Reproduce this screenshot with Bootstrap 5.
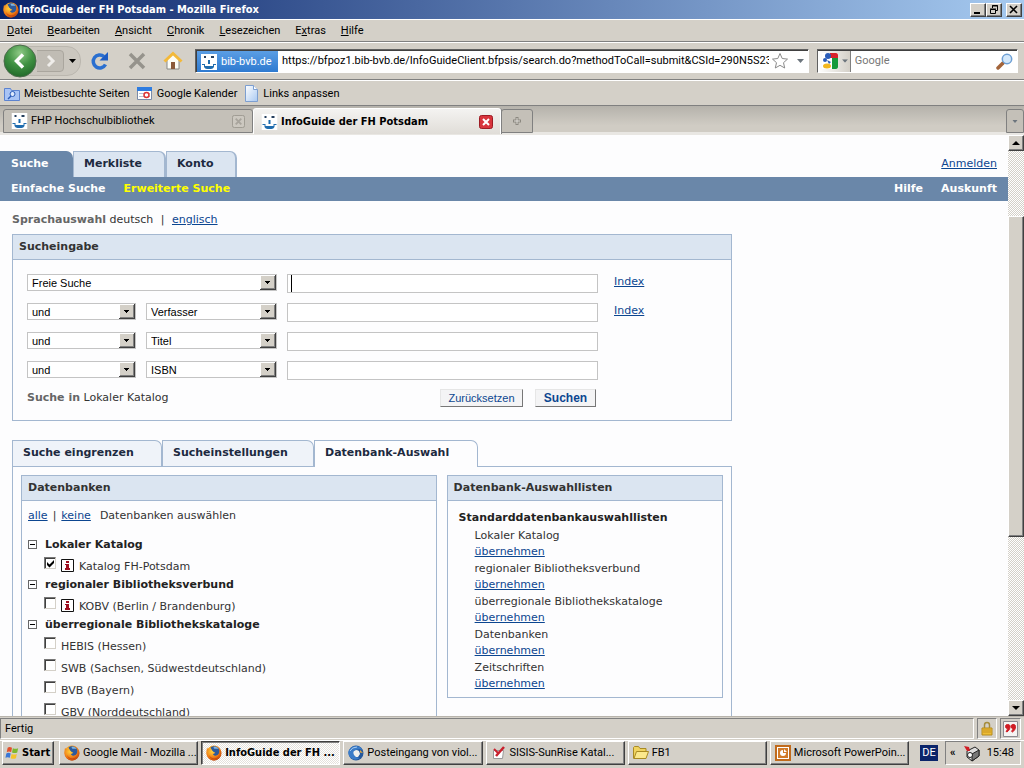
<!DOCTYPE html>
<html lang="de">
<head>
<meta charset="utf-8">
<meta name="viewport" content="width=device-width, initial-scale=1">
<title>InfoGuide der FH Potsdam - Mozilla Firefox</title>
<link rel="stylesheet" href="https://cdn.jsdelivr.net/npm/bootstrap@5.3.0/dist/css/bootstrap.min.css">
<style>
:root{--face:#d4d0c8;--shade:#808080;--ui:Roboto,"Liberation Sans",sans-serif;--uibold:"DejaVu Sans Condensed","DejaVu Sans",sans-serif;--page:"DejaVu Sans",sans-serif;--line:#a3b7d0;--pale:#dbe5f1;--bar:#6a87a9}
body{font:11px/14px var(--ui);color:#000;background:var(--face);height:100vh;overflow:hidden}
a{color:#0c4690}
button,input,select{font:inherit;color:inherit}
svg{display:block;flex:none}
.clean{background:none;border:0;padding:0}
.raised{background:var(--face);border:1px solid;border-color:#fff #404040 #404040 #fff;box-shadow:inset -1px -1px var(--shade)}
.sunken{border:1px solid;border-color:var(--shade) #fff #fff var(--shade)}
.uibold{font-family:var(--uibold);font-weight:700}

/* window frame */
.titlebar{height:19px;background:linear-gradient(90deg,#0a246a,#a6caf0);color:#fff;padding:0 2px 0 3px}
.titlebar button{width:16px;height:14px;padding:0}
.menubar{height:23px;border-top:1px solid #fff;border-bottom:1px solid var(--shade);padding:1px 7px 0;gap:15px}
.menubar a,.bookmarks a{color:#000;text-decoration:none}
.navrow{height:38px;border-top:1px solid #fff;border-bottom:1px solid var(--shade);padding:0 6px 0 4px}
.pill{height:30px;width:77px;border-radius:14px;background:#cbc7bf;border:1px solid #bbb7af}
.pill .back{margin-left:-2px}
.field{height:24px;background:#fff;border:1px solid;border-color:#606060 #fff #fff #606060;box-shadow:inset 1px 1px #404040}
.field input{border:0;outline:0;background:none;min-width:0}
.ident{background:linear-gradient(#5b9ee4,#2e7ad0);color:#fff;width:81px;height:21px;margin:1px 0 0 1px}
.engine{background:linear-gradient(90deg,#fff,var(--face));border-right:1px solid var(--shade);height:21px;width:33px}
.searchbox{width:201px}
.searchbox input::placeholder{color:#777;opacity:1}
.bookmarks{height:26px;border-top:1px solid #fff;border-bottom:1px solid var(--shade);padding:1px 4px 0;gap:7px}
.tabstrip{height:29px;background:linear-gradient(#b5b2ab,#d0ccc4 75%);border-bottom:3px solid #e9e7e3;padding:2px 0 0 3px}
.btab{width:250px;height:24px;border:1px solid var(--shade);border-radius:3px 3px 0 0;background:#c4c0b8;padding:0 7px;gap:3px;margin-top:1px}
.btab.on{width:248px;height:26px;margin-top:0;background:linear-gradient(#f4f3f1,#e0ddd8);border-bottom:0;border-color:#fff;box-shadow:1px 0 var(--shade)}
.btab.add{width:32px}
.btab.more{width:18px;margin-left:auto}
.edge{box-shadow:0 1px var(--shade);min-height:0}

/* scroll bar of the page view */
.scroller{width:16px;background:repeating-conic-gradient(#fff 0 25%,#d4d0c8 0 50%) 0 0/2px 2px}
.scroller button{width:16px;height:16px;padding:0}
.thumb{flex:320 0 0;margin-top:65px}
.track{flex:164 0 0}

/* library page */
.view{background:#fdfdfe;font:11px/16px var(--page);color:#333;min-width:0}
.maintabs{padding-right:11px}
.maintabs .mtab,.subtabs a{font-weight:700;text-decoration:none;color:#1d2a40;border:1px solid var(--line);border-radius:0 7px 0 0}
.maintabs .mtab{height:26px;line-height:24px;background:var(--pale);border-bottom:0;border-width:1px 2px 0 1px;padding:0 11px 0 10px}
.maintabs .mtab.on{background:var(--bar);border-color:var(--bar);color:#fff}
.w-tab1{width:73px}.w-tab2{width:93px}.w-tab3{width:71px}
.login{line-height:26px}
.navstrip{background:var(--bar);height:24px;padding:0 11px;gap:18px}
.navstrip a{color:#fff;font-weight:700;text-decoration:none}
.navstrip a.on{color:#ff0}
.lingo{padding:11px 0 6px}
.sheet{width:720px;max-width:100%}
.panel{border:1px solid var(--line)}
.panel h2{font:700 11px/24px var(--page);margin:0;padding:0 6px;background:var(--pale);border-bottom:1px solid var(--line)}
.gray{color:#666;font-weight:700}
.form-grid{padding:14px}
.qrow{height:19px;margin-bottom:10px;gap:10px}
.qrow select{appearance:none;height:17px;border:1px solid #c4c4c4;border-radius:0;padding:0 18px 0 4px;color:#000;font:11px/14px "Liberation Sans",sans-serif;background:#fff url("data:image/svg+xml,%3Csvg xmlns='http://www.w3.org/2000/svg' width='16' height='15'%3E%3Cpath fill='%23404040' d='M0 0h16v15H0z'/%3E%3Cpath fill='%23fff' d='M0 0h15v14H0z'/%3E%3Cpath fill='%23808080' d='M1 1h14v13H1z'/%3E%3Cpath fill='%23d4d0c8' d='M1 1h13v12H1z'/%3E%3Cpath d='M5 6h5v1H5zM6 7h3v1H6zM7 8h1v1H7z'/%3E%3C/svg%3E") right 0 top 0 no-repeat}
.w-wide{width:250px}.w-op{width:109px}.w-term{width:131px}
.qrow input{width:311px;height:19px;border:1px solid #c4c4c4;background:#fff;padding:0 4px;outline:0}
.qrow input.caret{background:linear-gradient(#000,#000) 3px 0/1px 17px no-repeat #fff}
.qrow a{margin-left:6px}
.actions{width:569px;max-width:100%;gap:12px;height:16px}
.act{width:83px;height:18px;background:#f4f4f5;border:1px solid;border-color:#e6e6e6 #777 #777 #e6e6e6;color:#0c4690;font:11px/14px "Liberation Sans",sans-serif;padding:0}
.act.go{width:61px;font-weight:700;font-size:12px}
.subtabs{margin-top:19px}
.subtabs a{height:26px;line-height:24px;background:#eff3f9;padding:0 10px;border-bottom:0}
.subtabs a.on{background:#fdfdfe;height:27px;margin-bottom:-1px;position:relative}
.w-s1{width:150px}.w-s2{width:152px}.w-s3{width:164px}
.dbbody{padding:8px;gap:10px;border-bottom:0!important}
.dbleft{flex:416 0 0;margin-bottom:-8px;border-bottom:0}
.dbright{flex:276 0 0;height:223px}
.dbin{padding:7px 6px 0}
.pick{margin-bottom:12px;gap:5px}
.group{font-weight:700;height:18px;gap:8px;color:#222}
.opt{height:22px;padding:4px 0 0 16px;gap:5px}
.opt input{appearance:none;width:12px;height:12px;margin:0 0 8px;border:1px solid;border-color:#777 #d4d0c8 #d4d0c8 #777;box-shadow:inset 1px 1px #404040;background:#fff}
.opt input:checked{background:url("data:image/svg+xml,%3Csvg xmlns='http://www.w3.org/2000/svg' width='10' height='10'%3E%3Cpath d='M2 4l2.500 2.500L9 2v3L4.500 9.500 2 7z'/%3E%3C/svg%3E") no-repeat #fff}
.minus{width:9px;height:9px;border:1px solid #666;background:linear-gradient(#000,#000) center/5px 1px no-repeat;padding:0;margin-bottom:2px}
.lists{padding:8px 11px 0}
.lists dt{font-weight:700;line-height:18px;color:#222}
.lists dd{margin:1px 0 0 16px}
.lists dd a{display:table;line-height:16px}

/* status bar and task bar */
.status{height:24px;border-top:1px solid #b8b4ac;padding:1px 3px 1px 0;gap:3px}
.cell{padding:0 2px}
.taskbar{height:28px;border-top:1px solid #fff;padding:0 3px 3px 2px;gap:3px}
.task{flex:1 1 0;min-width:0;height:24px;padding:0 4px;gap:3px}
.task.on{border-color:#404040 #fff #fff #404040;box-shadow:inset 1px 1px var(--shade);background:repeating-conic-gradient(#fff 0 25%,#e4e1dc 0 50%) 0 0/2px 2px}
.start{width:52px;height:24px;padding:0 2px;margin-right:2px;gap:3px}
.lang{background:#0a246a;color:#fff;width:18px;height:16px;line-height:16px;text-align:center;margin:0 4px 0 8px}
.tray{width:76px;height:24px;padding:0 6px 0 4px}
</style>
</head>
<body class="d-flex flex-column">

<svg width="0" height="0" class="position-absolute" aria-hidden="true">
  <defs>
    <radialGradient id="gGreen" cx=".5" cy=".25" r=".8"><stop offset="0" stop-color="#8fc986"/><stop offset=".5" stop-color="#3f9142"/><stop offset="1" stop-color="#1d6426"/></radialGradient>
    <radialGradient id="gFox" cx=".4" cy=".3" r=".8"><stop offset="0" stop-color="#ffd23c"/><stop offset=".6" stop-color="#ee7a15"/><stop offset="1" stop-color="#b33a0a"/></radialGradient>
    <linearGradient id="gPage" x2="1" y2="1"><stop offset="0" stop-color="#fff"/><stop offset="1" stop-color="#a9c9f2"/></linearGradient>
  </defs>
  <symbol id="fox" viewBox="0 0 16 16"><circle cx="8" cy="8" r="7.600" fill="url(#gFox)"/><path d="M4.500 2.500C7 .3 12 .8 13.300 5c.6 3-1 5.500-3.800 6C7 11 6.500 9.500 7 8.500l2-.7-2.500-1.300z" fill="#2c5a9c"/><path d="M7.500 2c2-.8 4 0 5 2-2-.6-3 0-4.500-.5z" fill="#7fb4e2"/><path d="M1 3l2 1.500 2-.3L7 6.500 9.300 8 7 9c.3 1.800 3 2.500 5 .8 1.500-1.400 1.900-3.300 1.500-5.300C16.500 9 13.500 15.300 8 15.400 2.500 15.300-.8 9.500 1 3z" fill="url(#gFox)"/><path d="M3 10c2 4 7 4.500 10 1.500C10.500 16 4 15 3 10z" fill="#c9480d"/></symbol>
  <symbol id="face" viewBox="0 0 16 16"><path fill="#fff" d="M0 0h16v16H0z"/><path fill="#27405e" d="M3 2h2v2H3zM10 2h3v2h-3z"/><path fill="#1f6cae" d="M7 6h2v4H7zM1 10h3v2H3v-1H1zM12 10h3v1h-2v1h-1zM3 12h10v1q-1 2-3 2H6q-2 0-3-2z"/></symbol>
  <symbol id="closer" viewBox="0 0 14 14"><rect x=".5" y=".5" width="13" height="13" rx="2" fill="var(--b)" stroke="var(--s)"/><path d="M4 4l6 6M10 4l-6 6" stroke="var(--x)" stroke-width="2"/></symbol>
  <symbol id="down" viewBox="0 0 7 4"><path d="M0 0h7L3.500 4z" fill="currentColor"/></symbol>
  <symbol id="info" viewBox="0 0 13 13"><path d="M.5.5h12v12H.5z" fill="#fff" stroke="#111"/><path fill="#a01020" d="M5 2h3v2H5zM4 5h4v4h1v2H4V9h1V6H4z"/></symbol>
</svg>

<header>
  <div class="titlebar d-flex align-items-center">
    <svg width="16" height="16"><use href="#fox"/></svg>
    <span class="uibold me-auto text-nowrap">InfoGuide der FH Potsdam - Mozilla Firefox</span>
    <button class="raised" aria-label="Minimieren"><svg width="14" height="12"><path d="M3 8h6v2H3z"/></svg></button>
    <button class="raised" aria-label="Wiederherstellen"><svg width="14" height="12" fill="none" stroke="#000"><path d="M5.500 4V1.500h5v5H9M5 2h6M3.500 5.500h5v4h-5zM3 5h6"/></svg></button>
    <button class="raised ms-1" aria-label="Schließen"><svg width="14" height="12"><path d="M3 2l7 7M10 2L3 9" stroke="#000" stroke-width="1.600"/></svg></button>
  </div>
  <nav class="menubar d-flex align-items-center">
    <a href="#"><u>D</u>atei</a><a href="#"><u>B</u>earbeiten</a><a href="#"><u>A</u>nsicht</a><a href="#"><u>C</u>hronik</a><a href="#"><u>L</u>esezeichen</a><a href="#">E<u>x</u>tras</a><a href="#"><u>H</u>ilfe</a>
  </nav>
  <div class="navrow d-flex align-items-center">
    <div class="pill d-flex align-items-center">
      <button class="clean back" aria-label="Zurück"><svg width="34" height="34" viewBox="0 0 34 34"><circle cx="17" cy="17" r="16" fill="url(#gGreen)" stroke="#4c6b4c"/><path d="M20 10.500L13.500 17l6.500 6.500" fill="none" stroke="#fff" stroke-width="3.500"/></svg></button>
      <button class="clean" aria-label="Vor"><svg width="28" height="22" viewBox="0 0 28 22"><path d="M0 .5h23q3.500 0 3.500 3.500v14q0 3.500-3.500 3.500H0" fill="#c0bcb4" stroke="#aaa69e"/><path d="M11 6l5 5-5 5" fill="none" stroke="#efedea" stroke-width="3"/></svg></button>
      <button class="clean ms-1" aria-label="Verlauf"><svg width="7" height="4"><use href="#down"/></svg></button>
    </div>
    <button class="clean ms-2 me-3" aria-label="Neu laden"><svg width="22" height="22" viewBox="0 0 22 22"><path d="M16.500 14.500A6.500 6.500 0 1 1 15 6.500" fill="none" stroke="#2a6fd0" stroke-width="3.500"/><path d="M19 2v8.500h-8.500z" fill="#1c5cc4"/></svg></button>
    <button class="clean me-3" aria-label="Stopp"><svg width="20" height="20"><path d="M3 3l14 14M17 3L3 17" stroke="#96938c" stroke-width="3.500"/></svg></button>
    <button class="clean me-2" aria-label="Startseite"><svg width="20" height="20" viewBox="0 0 20 20"><path d="M4 9v9h12V9l-6-6z" fill="#fdfdf6" stroke="#8a8a86"/><path d="M1.500 10.500L10 2.500l8.500 8" fill="none" stroke="#f3b93a" stroke-width="3"/><path d="M8 11h4v7H8z" fill="#8b5a3a"/></svg></button>
    <div class="field d-flex flex-fill ms-1 me-2 align-items-center">
      <div class="ident d-flex align-items-center px-1"><svg width="16" height="16"><use href="#face"/></svg><span class="ps-1">bib-bvb.de</span></div>
      <input type="text" class="flex-fill ps-1" aria-label="Adresse" value="https://bfpoz1.bib-bvb.de/InfoGuideClient.bfpsis/search.do?methodToCall=submit&amp;CSId=290N5S23">
      <svg width="18" height="18" viewBox="0 0 18 18"><path d="M9 1.500l2.200 5 5.300.6-4 3.600 1.200 5.300L9 13.300 4.300 16l1.200-5.300-4-3.600 5.300-.6z" fill="#fff" stroke="#8a8a8a"/></svg>
      <button class="clean text-secondary ms-2 me-1" aria-label="Adressliste"><svg width="7" height="4"><use href="#down"/></svg></button>
    </div>
    <div class="field searchbox d-flex align-items-center">
      <div class="engine d-flex align-items-center ps-1"><svg width="16" height="16" viewBox="0 0 16 16"><path fill="#fff" d="M0 0h16v16H0z"/><path d="M8 0h6q2 0 2 2v3H8z" fill="#d8222a"/><path d="M10 5h6v9q0 2-2 2h-4z" fill="#159a3c"/><circle cx="6" cy="3" r="3" fill="#2a5cb8"/><circle cx="3" cy="7" r="2" fill="#2a5cb8"/><path d="M5 7l4 2-2 2z" fill="#2a5cb8"/><ellipse cx="5" cy="13" rx="4" ry="2.500" fill="#f3b71d"/></svg><button class="clean text-secondary ms-1" aria-label="Suchmaschine"><svg width="6" height="4" viewBox="0 0 7 4"><use href="#down"/></svg></button></div>
      <input type="text" class="flex-fill ps-1" placeholder="Google" aria-label="Websuche">
      <button class="clean me-1" aria-label="Suche starten"><svg width="17" height="17"><path d="M2 15l5-5" stroke="#a3643a" stroke-width="3.500" stroke-linecap="round"/><circle cx="11" cy="6" r="4.700" fill="#d3e8fb" stroke="#6d9fd4" stroke-width="1.500"/></svg></button>
    </div>
  </div>
  <nav class="bookmarks d-flex align-items-center">
    <a href="#" class="d-flex gap-1 align-items-center"><svg width="16" height="14"><path d="M.5 1.500h6l1 2h8v10H.5z" fill="#a9c4f5" stroke="#5c83cf"/><circle cx="8.500" cy="7" r="2.500" fill="#dfeafc" stroke="#2b5cb8"/><path d="M7 9l-3 3" stroke="#2b5cb8" stroke-width="1.500"/></svg>Meistbesuchte Seiten</a>
    <a href="#" class="d-flex gap-1 align-items-center"><svg width="16" height="14"><path d="M.5.5h14v12H.5z" fill="#fff" stroke="#7a8ba8"/><path d="M0 0h15v4H0z" fill="#2e7ce0"/><path d="M2 6h11v1H2zM2 9h11v1H2z" fill="#b9c3d4"/><circle cx="9.500" cy="8" r="2.500" fill="#fff" stroke="#d33" stroke-width="1.500"/></svg>Google Kalender</a>
    <a href="#" class="d-flex gap-1 align-items-center"><svg width="15" height="17"><path d="M1.500.5h8l4 4v12h-12z" fill="url(#gPage)" stroke="#7d9fd0"/><path d="M9.500.5v4h4" fill="#fff" stroke="#7d9fd0"/></svg>Links anpassen</a>
  </nav>
  <div class="tabstrip d-flex">
    <div class="btab d-flex align-items-center"><svg width="17" height="16" viewBox="0 0 16 16"><use href="#face"/></svg><span class="me-auto">FHP Hochschulbibliothek</span><button class="clean" aria-label="Tab schließen"><svg width="13" height="13" style="--b:#ccc8c0;--s:#9c9890;--x:#a8a49c"><use href="#closer"/></svg></button></div>
    <div class="btab on d-flex align-items-center"><svg width="17" height="16" viewBox="0 0 16 16"><use href="#face"/></svg><span class="uibold me-auto text-nowrap">InfoGuide der FH Potsdam</span><button class="clean" aria-label="Tab schließen"><svg width="14" height="14" style="--b:#d8343c;--s:#9d1c24;--x:#fff"><use href="#closer"/></svg></button></div>
    <button class="btab add d-flex align-items-center justify-content-center" aria-label="Neuer Tab"><svg width="10" height="10"><path d="M5 1v8M1 5h8" stroke="#8b8880" stroke-width="3"/><path d="M5 2v6M2 5h6" stroke="#e0ddd8"/></svg></button>
    <button class="btab more text-secondary d-flex align-items-center justify-content-center px-0" aria-label="Alle Tabs"><svg width="6" height="3" viewBox="0 0 7 4"><use href="#down"/></svg></button>
  </div>
</header>

<div class="edge d-flex flex-fill overflow-hidden">
  <main class="view flex-fill overflow-hidden">
    <div class="maintabs d-flex pt-3">
      <a href="#" class="mtab on w-tab1">Suche</a><a href="#" class="mtab w-tab2">Merkliste</a><a href="#" class="mtab w-tab3">Konto</a>
      <a href="#" class="login ms-auto">Anmelden</a>
    </div>
    <nav class="navstrip d-flex align-items-center">
      <a href="#">Einfache Suche</a><a href="#" class="on me-auto">Erweiterte Suche</a><a href="#">Hilfe</a><a href="#">Auskunft</a>
    </nav>
    <div class="px-2 ms-1">
      <p class="lingo mb-0"><span class="gray">Sprachauswahl</span> deutsch <span class="px-1">|</span> <a href="#">englisch</a></p>
      <form class="panel sheet">
        <h2>Sucheingabe</h2>
        <div class="form-grid">
          <div class="qrow d-flex"><select class="w-wide" aria-label="Suchfeld 1"><option>Freie Suche</option></select><input type="text" class="caret" aria-label="Suchbegriff 1"><a href="#">Index</a></div>
          <div class="qrow d-flex"><select class="w-op" aria-label="Verknüpfung 2"><option>und</option></select><select class="w-term" aria-label="Suchfeld 2"><option>Verfasser</option></select><input type="text" aria-label="Suchbegriff 2"><a href="#">Index</a></div>
          <div class="qrow d-flex"><select class="w-op" aria-label="Verknüpfung 3"><option>und</option></select><select class="w-term" aria-label="Suchfeld 3"><option>Titel</option></select><input type="text" aria-label="Suchbegriff 3"></div>
          <div class="qrow d-flex"><select class="w-op" aria-label="Verknüpfung 4"><option>und</option></select><select class="w-term" aria-label="Suchfeld 4"><option>ISBN</option></select><input type="text" aria-label="Suchbegriff 4"></div>
          <div class="actions d-flex align-items-center"><span class="me-auto"><span class="gray">Suche in</span> Lokaler Katalog</span><button type="reset" class="act">Zurücksetzen</button><button type="button" class="act go">Suchen</button></div>
        </div>
      </form>
      <div class="subtabs d-flex sheet">
        <a href="#" class="w-s1">Suche eingrenzen</a><a href="#" class="w-s2">Sucheinstellungen</a><a href="#" class="on w-s3">Datenbank-Auswahl</a>
      </div>
      <div class="panel sheet dbbody d-flex align-items-start">
        <section class="panel dbleft">
          <h2>Datenbanken</h2>
          <div class="dbin">
            <p class="pick d-flex"><a href="#">alle</a><span>|</span><a href="#">keine</a><span class="ps-1">Datenbanken auswählen</span></p>
            <div class="group d-flex align-items-center"><button class="minus" aria-label="Zuklappen"></button>Lokaler Katalog</div>
            <label class="opt d-flex align-items-center"><input type="checkbox" checked><svg width="13" height="13" class="mb-1"><use href="#info"/></svg>Katalog FH-Potsdam</label>
            <div class="group d-flex align-items-center"><button class="minus" aria-label="Zuklappen"></button>regionaler Bibliotheksverbund</div>
            <label class="opt d-flex align-items-center"><input type="checkbox"><svg width="13" height="13" class="mb-1"><use href="#info"/></svg>KOBV (Berlin / Brandenburg)</label>
            <div class="group d-flex align-items-center"><button class="minus" aria-label="Zuklappen"></button>überregionale Bibliothekskataloge</div>
            <label class="opt d-flex align-items-center"><input type="checkbox">HEBIS (Hessen)</label>
            <label class="opt d-flex align-items-center"><input type="checkbox">SWB (Sachsen, Südwestdeutschland)</label>
            <label class="opt d-flex align-items-center"><input type="checkbox">BVB (Bayern)</label>
            <label class="opt d-flex align-items-center"><input type="checkbox">GBV (Norddeutschland)</label>
          </div>
        </section>
        <section class="panel dbright">
          <h2>Datenbank-Auswahllisten</h2>
          <dl class="lists">
            <dt>Standarddatenbankauswahllisten</dt>
            <dd>Lokaler Katalog<a href="#">übernehmen</a></dd>
            <dd>regionaler Bibliotheksverbund<a href="#">übernehmen</a></dd>
            <dd>überregionale Bibliothekskataloge<a href="#">übernehmen</a></dd>
            <dd>Datenbanken<a href="#">übernehmen</a></dd>
            <dd>Zeitschriften<a href="#">übernehmen</a></dd>
          </dl>
        </section>
      </div>
    </div>
  </main>
  <div class="scroller d-flex flex-column">
    <button class="raised" aria-label="Nach oben"><svg width="14" height="14"><path d="M3 9h8L7 5z"/></svg></button>
    <div class="thumb raised"></div>
    <div class="track"></div>
    <button class="raised" aria-label="Nach unten"><svg width="14" height="14"><path d="M3 5h8L7 9z"/></svg></button>
  </div>
</div>

<footer>
  <div class="status d-flex">
    <div class="sunken flex-fill d-flex align-items-center ps-1">Fertig</div>
    <div class="sunken cell d-flex align-items-center"><svg width="14" height="15" viewBox="-1 0 14 15"><path d="M3.500 7V4a2.500 2.500 0 0 1 5 0v3" fill="none" stroke="#a58c3c" stroke-width="1.500"/><path d="M1 7h10v7H1z" fill="#eebd35" stroke="#b58a1c"/><path d="M2 9h8M2 11h8" stroke="#c79322"/></svg></div>
    <div class="sunken cell d-flex align-items-center"><svg width="15" height="16"><path d="M.5.5h14v15H.5z" fill="#f6f4f2" stroke="#8c8a90"/><path d="M4.500 3.500a2 2 0 0 1 2.500 2c0 2.500-1 4-3 5.500l-1-.7c1-1 1.500-2 1.500-2.800A2 2 0 0 1 4.500 3.500zM10 3.500a2 2 0 0 1 2.500 2c0 2.500-1 4-3 5.500l-1-.7c1-1 1.500-2 1.500-2.800a2 2 0 0 1 0-4z" fill="#d01c24" stroke="#d01c24"/></svg></div>
  </div>
  <div class="taskbar d-flex align-items-center">
    <button class="raised start uibold d-flex align-items-center"><svg width="14" height="14" viewBox="0 0 16 16"><path d="M3 2q2-1.500 5 0L7 7Q4.500 5.700 2 7z" fill="#e2502c"/><path d="M9 2.500q3 1.200 6 0L14 7.500q-3 1.200-6 0z" fill="#7cb82f"/><path d="M1.500 8.500q2.500-1.500 5 0L5.500 13.500Q3 12 .5 13.500z" fill="#3a77d6"/><path d="M7.500 9q3 1.200 6 0l-1 5q-3 1.200-6 0z" fill="#f4c32c"/></svg>Start</button>
    <button class="raised task d-flex align-items-center"><svg width="16" height="16"><use href="#fox"/></svg><span class="text-nowrap">Google Mail - Mozilla ...</span></button>
    <button class="raised task on uibold d-flex align-items-center"><svg width="16" height="16"><use href="#fox"/></svg><span class="text-nowrap">InfoGuide der FH ...</span></button>
    <button class="raised task d-flex align-items-center"><svg width="16" height="16" viewBox="0 0 16 16"><circle cx="8" cy="8" r="7.500" fill="#24589c"/><path d="M5 6q3-2 6 0l1 3-2 3-4 0-3-2z" fill="#f1f1ee"/><path d="M1 5Q5-1 12 2l3 3Q10 3 6 6q-2 3 2 6l4 1q-6 4-10-1-3-4-1-7z" fill="#3b7cc8"/><path d="M2 6q2-4 7-4" fill="none" stroke="#a9cdf0"/><path d="M12 5l3 3-3-.5z" fill="#e6a83c"/></svg><span class="text-nowrap">Posteingang von viol...</span></button>
    <button class="raised task d-flex align-items-center"><svg width="16" height="16"><path d="M2.500 5.500h10l-1 8h-9z" fill="#fff" stroke="#999"/><path d="M5 11l8-9" stroke="#c8202c" stroke-width="2.500"/><path d="M3 4l4 4" stroke="#c8202c" stroke-width="2"/></svg><span class="text-nowrap">SISIS-SunRise Katal...</span></button>
    <button class="raised task d-flex align-items-center"><svg width="16" height="16"><path d="M.5 13.500v-11l1-1h4l1.500 2h6v3" fill="#f0d35e" stroke="#a98a22"/><path d="M1 13.500l2.500-7h12l-2.500 7z" fill="#fbe88c" stroke="#a98a22"/></svg><span class="text-nowrap">FB1</span></button>
    <button class="raised task d-flex align-items-center"><svg width="16" height="16"><path d="M1 1h14v14H1z" fill="#fff" stroke="#c06a1c" stroke-width="2"/><path d="M3 3h10v10H3z" fill="#d27a28"/><path d="M8 5a3 3 0 1 0 3 3H8zM9 4v3h3" fill="#fff"/></svg><span class="text-nowrap">Microsoft PowerPoin...</span></button>
    <span class="lang">DE</span>
    <div class="sunken tray d-flex align-items-center justify-content-between"><strong>«</strong><svg width="17" height="17" viewBox="0 0 17 17"><path d="M4 6l8-4 4 3v6l-7 5-5-4z" fill="#ddd" stroke="#222"/><path d="M9 9l7-4v6l-7 5z" fill="#777" stroke="#222"/><path d="M1 1l5 1 1 4H4z" fill="#d01c24"/><circle cx="7" cy="10" r="2.500" fill="#fff" stroke="#222"/></svg><span>15:48</span></div>
  </div>
</footer>
<script src="https://cdn.jsdelivr.net/npm/bootstrap@5.3.0/dist/js/bootstrap.bundle.min.js"></script>
</body>
</html>
